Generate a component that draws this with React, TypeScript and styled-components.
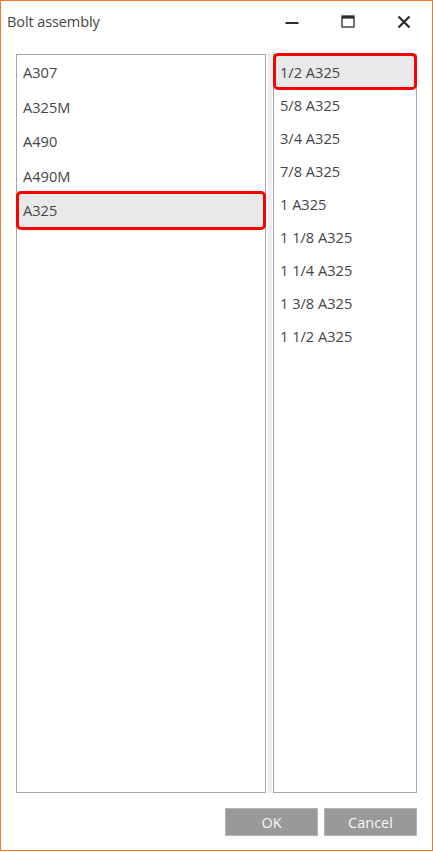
import React from "react";
import styled, { createGlobalStyle } from "styled-components";

const grades = ["A307", "A325M", "A490", "A490M", "A325"];
const sizes = [
  "1/2 A325",
  "5/8 A325",
  "3/4 A325",
  "7/8 A325",
  "1 A325",
  "1 1/8 A325",
  "1 1/4 A325",
  "1 3/8 A325",
  "1 1/2 A325",
];

const App = () => {
  return (
    <>
      <GlobalStyle />
      <Window>
        <TitleBar>
          <Title>Bolt assembly</Title>
          <Controls>
            <ControlButton aria-label="Minimize">
              <svg width="14" height="14" viewBox="0 0 14 14">
                <rect x="0.5" y="7" width="13" height="2" fill="#2b2b2b" />
              </svg>
            </ControlButton>
            <ControlButton aria-label="Maximize">
              <svg width="14" height="14" viewBox="0 0 14 14">
                <rect x="1" y="1" width="12" height="11" fill="none" stroke="#2b2b2b" strokeWidth="1.3" />
                <rect x="1" y="1" width="12" height="2.6" fill="#2b2b2b" />
              </svg>
            </ControlButton>
            <ControlButton aria-label="Close">
              <svg width="14" height="14" viewBox="0 0 14 14">
                <path d="M1.5 1.5 L12.5 12.5 M12.5 1.5 L1.5 12.5" stroke="#2b2b2b" strokeWidth="2.2" />
              </svg>
            </ControlButton>
          </Controls>
        </TitleBar>

        <Panels>
          <List $width={250}>
            {grades.map((g) => (
              <Item key={g} $height={34.5} $selected={g === "A325"}>
                {g}
              </Item>
            ))}
          </List>
          <Splitter />
          <List $width={144}>
            {sizes.map((s, i) => (
              <Item key={s} $height={33} $selected={i === 0}>
                {s}
              </Item>
            ))}
          </List>
        </Panels>

        <Footer>
          <Button>OK</Button>
          <Button>Cancel</Button>
        </Footer>
      </Window>
    </>
  );
};

export default App;

const GlobalStyle = createGlobalStyle`
  html, body {
    margin: 0;
    padding: 0;
    background: #ffffff;
  }
  body {
    font-family: "Open Sans", "Noto Sans", "Liberation Sans", sans-serif;
  }
  * {
    box-sizing: border-box;
  }
`;

const Window = styled.div`
  width: 433px;
  height: 851px;
  border: 1px solid #f07a2c;
  background: #ffffff;
  display: flex;
  flex-direction: column;
`;

const TitleBar = styled.div`
  height: 41px;
  display: flex;
  align-items: center;
  justify-content: space-between;
`;

const Title = styled.div`
  padding-left: 6px;
  font-size: 14.5px;
  color: #444444;
  letter-spacing: -0.1px;
`;

const Controls = styled.div`
  display: flex;
  height: 100%;
`;

const ControlButton = styled.div`
  width: 56px;
  height: 100%;
  display: flex;
  align-items: center;
  justify-content: center;
`;

const Panels = styled.div`
  flex: 1;
  display: flex;
  margin-top: 12px;
  padding: 0 15px;
  min-height: 0;
`;

const List = styled.div<{ $width: number }>`
  width: ${(p) => p.$width}px;
  border: 1px solid #a6a6a6;
  display: flex;
  flex-direction: column;
`;

const Item = styled.div<{ $height: number; $selected?: boolean }>`
  position: relative;
  height: ${(p) => p.$height}px;
  flex: none;
  display: flex;
  align-items: center;
  padding-left: 6px;
  font-size: 14.6px;
  color: #454545;
  background: ${(p) => (p.$selected ? "#e9e9e9" : "transparent")};

  &::after {
    content: "";
    display: ${(p) => (p.$selected ? "block" : "none")};
    position: absolute;
    top: -2px;
    bottom: -2px;
    left: -1px;
    right: -1px;
    border: 3px solid #ff0000;
    border-radius: 5px;
  }
`;

const Splitter = styled.div`
  width: 7px;
  background: linear-gradient(
    to right,
    transparent 2px,
    #f0f0f0 2px,
    #f0f0f0 6px,
    transparent 6px
  );
`;

const Footer = styled.div`
  display: flex;
  justify-content: flex-end;
  gap: 6px;
  padding: 15px 15px 14px;
`;

const Button = styled.div`
  width: 93px;
  height: 28px;
  background: #999999;
  border: 1px solid #b4b4b4;
  color: #f7f7f7;
  font-size: 14.5px;
  display: flex;
  align-items: center;
  justify-content: center;
`;
